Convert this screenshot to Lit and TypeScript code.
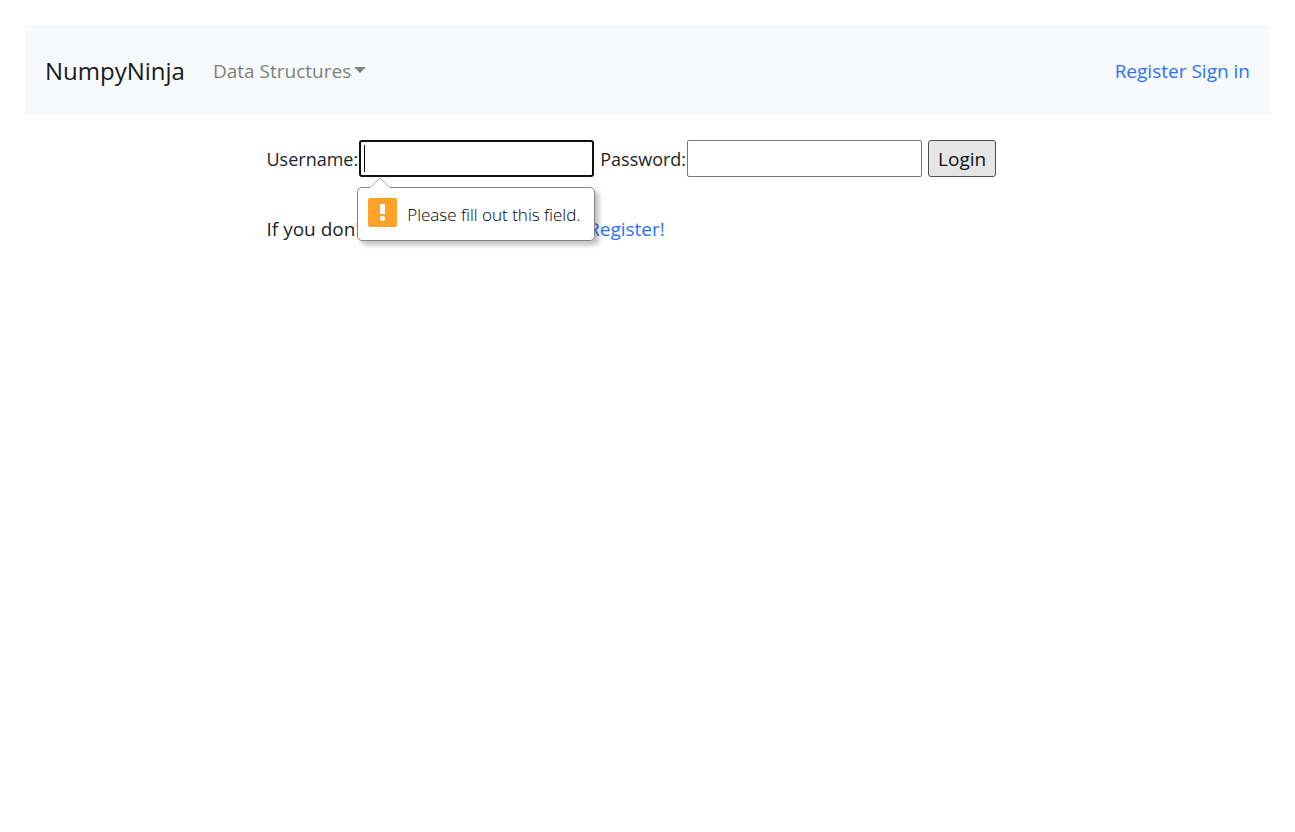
import { LitElement, html, css } from "lit";
import { customElement } from "lit/decorators.js";

@customElement("site-navbar")
class SiteNavbar extends LitElement {
  static styles = css`
    :host {
      display: block;
    }
    .navbar {
      display: flex;
      align-items: center;
      justify-content: space-between;
      min-height: 90px;
      padding: 2px 20px 0;
      box-sizing: border-box;
      background: #f8f9fa;
      font-size: 19px;
      line-height: 30px;
    }
    .start {
      display: flex;
      align-items: center;
      gap: 28px;
    }
    .brand {
      font-size: 24px;
      color: #1a1b1b;
      text-decoration: none;
    }
    .toggle {
      display: flex;
      align-items: center;
      gap: 3px;
      padding: 0;
      border: 0;
      background: none;
      font: inherit;
      line-height: 30px;
      color: #7f8080;
    }
    .caret {
      border: 6px solid transparent;
      border-top-color: currentColor;
      border-bottom: 0;
      margin-bottom: 2px;
    }
    .links {
      display: flex;
      gap: 5px;
    }
    .link {
      color: #2a72fb;
      text-decoration: none;
    }
  `;

  render() {
    return html`
      <nav class="navbar">
        <div class="start">
          <a class="brand" href="#">NumpyNinja</a>
          <button class="toggle" type="button" aria-haspopup="true">
            Data Structures<span class="caret"></span>
          </button>
        </div>
        <div class="links">
          <a class="link" href="#register">Register</a>
          <a class="link" href="#signin">Sign in</a>
        </div>
      </nav>
    `;
  }
}

@customElement("validation-bubble")
class ValidationBubble extends LitElement {
  static styles = css`
    :host {
      display: block;
    }
    .bubble {
      position: relative;
      display: flex;
      align-items: center;
      gap: 10px;
      height: 54px;
      padding: 0 10px;
      box-sizing: border-box;
      border: 1px solid #858585;
      border-radius: 5px;
      background: #fff;
      box-shadow: 4px 4px 5px rgba(0, 0, 0, 0.25);
      font-size: 17px;
      font-weight: 300;
      color: #000;
      white-space: nowrap;
    }
    .arrow {
      position: absolute;
      left: 11px;
      top: -11px;
    }
    .icon {
      flex: none;
      margin-bottom: 4px;
    }
  `;

  render() {
    return html`
      <div class="bubble" role="alert">
        <svg class="arrow" width="22" height="11" viewBox="0 0 22 11">
          <path d="M1 11 L1 10.5 L11 .8 L21 10.5 L21 11Z" fill="#fff" />
          <path d="M1 10.5 L11 .8 L21 10.5" fill="none" stroke="#a5a5a5" />
        </svg>
        <svg class="icon" width="29" height="29" viewBox="0 0 29 29">
          <rect width="29" height="29" rx="2" fill="#ffa328" />
          <rect x="12" y="6" width="5" height="10" fill="#fff" />
          <circle cx="14.5" cy="20.2" r="2.5" fill="#fff" />
        </svg>
        <span>Please fill out this field.</span>
      </div>
    `;
  }
}

@customElement("login-form")
class LoginForm extends LitElement {
  static styles = css`
    :host {
      display: block;
    }
    .form {
      display: flex;
      flex-wrap: wrap;
      gap: 6px;
    }
    .field {
      position: relative;
      display: flex;
      align-items: center;
    }
    .label {
      padding-right: 1px;
    }
    .input {
      width: 235px;
      height: 37px;
      box-sizing: border-box;
      border: 1px solid #767676;
      border-radius: 2px;
      padding: 1px 5px;
      background: #fff;
      font: inherit;
      outline: none;
    }
    .active {
      border: 2px solid #101010;
      border-radius: 3px;
      background: linear-gradient(#000, #000) 3px 3px / 1px 27px no-repeat #fff;
    }
    .bubble {
      position: absolute;
      right: -1px;
      top: 47px;
      width: 238px;
      z-index: 1;
    }
    .submit {
      height: 37px;
      padding: 0 9px;
      border: 1px solid #4f4f4f;
      border-radius: 3px;
      background: #e5e5e5;
      font: inherit;
      font-size: 19px;
      color: #111;
    }
    .hint {
      margin: 37px 0 0;
      font-size: 19px;
      line-height: 30px;
    }
    .link {
      color: #2a72fb;
      text-decoration: none;
    }
  `;

  render() {
    return html`
      <form class="form" novalidate>
        <div class="field">
          <label class="label" for="username">Username:</label>
          <input class="input active" id="username" type="text" required />
          <validation-bubble class="bubble"></validation-bubble>
        </div>
        <div class="field">
          <label class="label" for="password">Password:</label>
          <input class="input" id="password" type="password" required />
        </div>
        <button class="submit" type="submit">Login</button>
      </form>
      <p class="hint">
        If you don't have an account. Please
        <a class="link" href="#register">Register!</a>
      </p>
    `;
  }
}

@customElement("app-root")
class AppRoot extends LitElement {
  static styles = css`
    :host {
      display: block;
      padding: 25px;
      font-family: "Open Sans", "Noto Sans", sans-serif;
      font-size: 18px;
      color: #212529;
    }
    .content {
      max-width: 762px;
      margin: 25px auto 0;
    }
  `;

  render() {
    return html`
      <site-navbar></site-navbar>
      <main class="content">
        <login-form></login-form>
      </main>
    `;
  }
}
